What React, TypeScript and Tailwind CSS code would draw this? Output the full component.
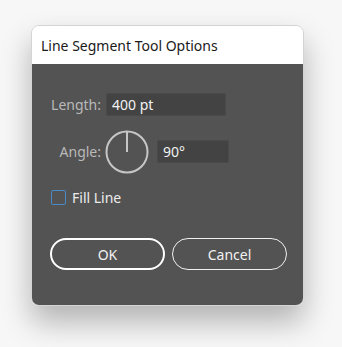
export default function App() {
  return (
    <div className="min-h-[347px] w-[342px] bg-[#f7f7f7] pl-[31px] pt-[25px] font-['Noto_Sans',sans-serif]">
      <div className="h-[281px] w-[273px] overflow-hidden rounded-[8px] border border-[#d4d4d4] shadow-[0_16px_30px_rgba(0,0,0,0.28)]">
        <div className="flex h-[38px] items-center bg-white pl-[9px] text-[14px] text-[#1a1a1a]">
          Line Segment Tool Options
        </div>
        <div className="h-[243px] bg-[#535353] pl-[18px] pt-[29px] text-[14px]">
          <div className="flex h-[23px] items-center">
            <span className="w-[51px] text-right text-[#b9b9b9]">Length:</span>
            <div className="ml-[5px] flex h-[23px] w-[120px] items-center rounded-[2px] border border-[#4a4a4a] bg-[#434343] pl-[5px] text-[#f2f2f2]">
              400 pt
            </div>
          </div>
          <div className="mt-[14px] flex h-[43px] items-center">
            <span className="w-[51px] text-right text-[#b9b9b9]">Angle:</span>
            <svg width="44" height="44" viewBox="0 0 44 44" className="ml-[4px]">
              <circle cx="22" cy="22" r="20.5" fill="none" stroke="#c6c6c6" strokeWidth="2" />
              <line x1="22" y1="2" x2="22" y2="22" stroke="#c6c6c6" strokeWidth="2" />
            </svg>
            <div className="ml-[8px] flex h-[23px] w-[72px] items-center rounded-[2px] border border-[#4a4a4a] bg-[#434343] pl-[5px] text-[#f2f2f2]">
              90°
            </div>
          </div>
          <div className="mt-[17px] flex h-[15px] items-center">
            <div className="ml-[1px] h-[15px] w-[15px] rounded-[2px] border border-[#4b8ac6]" />
            <span className="ml-[6px] text-[#ececec]">Fill Line</span>
          </div>
          <div className="mt-[33px] flex gap-[7px]">
            <button className="flex h-[32px] w-[115px] items-center justify-center rounded-full border-2 border-white text-[#f2f2f2]">
              OK
            </button>
            <button className="flex h-[32px] w-[115px] items-center justify-center rounded-full border-[1.5px] border-[#f0f0f0] text-[#f2f2f2]">
              Cancel
            </button>
          </div>
        </div>
      </div>
    </div>
  );
}
